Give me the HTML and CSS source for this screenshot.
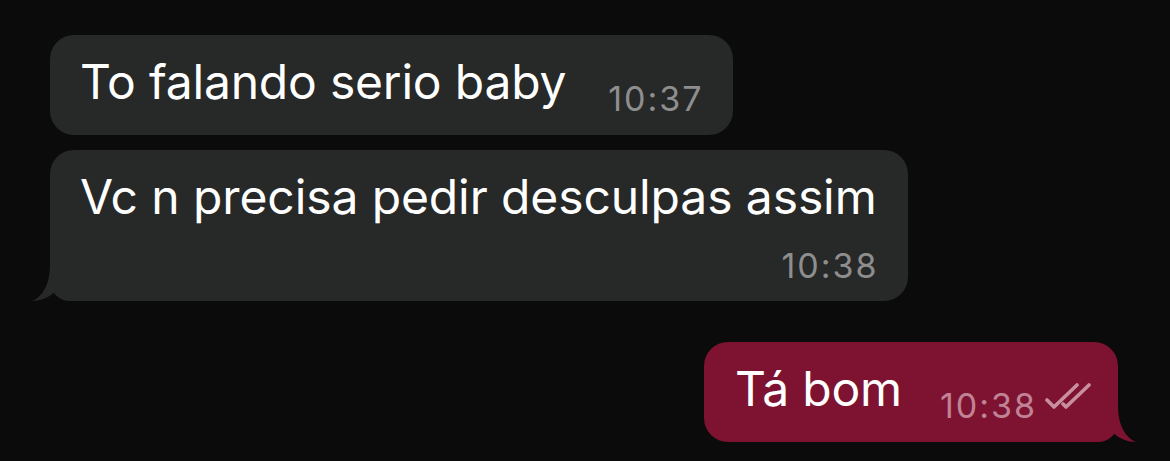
FILE: index.html
```
<!DOCTYPE html>
<html lang="pt">
<head>
  <meta charset="UTF-8"/>
  <title>Chat</title>
  <link rel="stylesheet" href="styles.css">
</head>
<body>

  <div class="chat">
    <div class="bubble in first">
      <span class="text">To falando serio baby</span>
      <span class="time">10:37</span>
    </div>

    <div class="bubble in stacked">
      <span class="text">Vc n precisa pedir desculpas assim</span>
      <span class="time">10:38</span>
      <svg class="tail tail-left" width="30" height="40" viewBox="0 0 30 40">
        <path d="M20 4 C20 24 12 36 2 40 C10 40 18 37 25 31 L28 22 L20 9 Z"/>
      </svg>
    </div>

    <div class="bubble out">
      <span class="text">Tá bom</span>
      <span class="time">10:38</span>
      <svg class="ticks" width="48" height="26" viewBox="0 0 48 26">
        <path d="M3 17 L10 24 L33 2"/>
        <path d="M19 21 L22 24 L45 2"/>
      </svg>
      <svg class="tail tail-right" width="30" height="40" viewBox="0 0 30 40">
        <path d="M10 4 C10 24 18 36 28 40 C20 40 12 37 5 31 L2 22 L10 9 Z"/>
      </svg>
    </div>
  </div>

</body>
</html>
```

FILE: styles.css
```
* {
  box-sizing: border-box;
  margin: 0;
  padding: 0;
}

body {
  background: #0b0b0b;
  font-family: 'Inter', 'Noto Sans', sans-serif;
  color: #ffffff;
  height: 461px;
  overflow: hidden;
}

.chat {
  display: flex;
  flex-direction: column;
  padding: 35px 52px 0 50px;
}

.bubble {
  position: relative;
  display: flex;
  align-items: flex-end;
  border-radius: 24px;
  padding: 19px 31px 16px 30px;
}

.bubble .text {
  font-size: 48px;
  line-height: 56px;
  letter-spacing: -0.2px;
  margin-bottom: 9px;
  white-space: nowrap;
}

.bubble .time {
  font-size: 34px;
  line-height: 40px;
  letter-spacing: 2px;
  color: #8e8e8e;
  margin-left: 42px;
  margin-right: -2px;
}

/* incoming */
.in {
  background: #272828;
  align-self: flex-start;
}

.first {
  margin-bottom: 15px;
}

.stacked {
  flex-direction: column;
  padding-bottom: 15px;
  border-bottom-left-radius: 20px;
}

.stacked .text {
  letter-spacing: -0.1px;
  margin-bottom: 21px;
}

.stacked .time {
  align-self: flex-end;
}

/* outgoing */
.out {
  background: #7d1331;
  align-self: flex-end;
  margin-top: 41px;
  padding-right: 26px;
  border-bottom-right-radius: 20px;
}

.out .text {
  margin-left: 1px;
}

.out .time {
  color: #c08396;
  margin-left: 38px;
}

.ticks {
  fill: none;
  stroke: #c98fa1;
  stroke-width: 3.6;
  stroke-linecap: round;
  stroke-linejoin: round;
  margin: 0 0 17px 9px;
}

.tail {
  position: absolute;
  bottom: 0;
}

.tail-left {
  left: -20px;
  fill: #272828;
}

.tail-right {
  right: -20px;
  fill: #7d1331;
}
```
